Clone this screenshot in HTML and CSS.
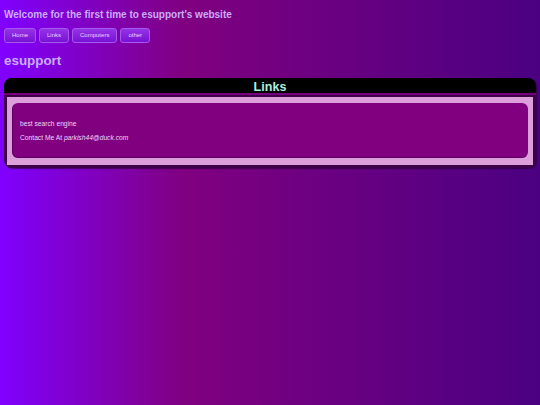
FILE: index.html
```html
<!DOCTYPE html>
<html>
<head>
<meta charset="utf-8">
<link rel="stylesheet" href="styles.css">
</head>
<body>
<h2 class="welcome">Welcome for the first time to esupport's website</h2>
<nav class="nav">
  <a class="btn" href="#">Home</a>
  <a class="btn" href="#">Links</a>
  <a class="btn" href="#">Computers</a>
  <a class="btn" href="#">other</a>
</nav>
<h1 class="site">esupport</h1>
<section class="panel">
  <h3 class="panel-head">Links</h3>
  <div class="panel-body">
    <div class="card">
      <p class="line">best search engine</p>
      <p class="line">Contact Me At <em>parkish44@duck.com</em></p>
    </div>
  </div>
</section>
</body>
</html>
```
FILE: styles.css
```css
html, body {
  margin: 0;
  height: 100%;
}
body {
  padding: 0 4px;
  box-sizing: border-box;
  font-family: "Liberation Sans", Arial, sans-serif;
  background: linear-gradient(to right, #8000ff 0%, #800080 34%, #4b0082 100%);
  color: #e6ccff;
}
.welcome {
  margin: 0;
  padding-top: 9px;
  font-size: 10px;
  line-height: 12px;
  font-weight: bold;
  color: #c9aefc;
}
.nav {
  display: flex;
  gap: 3px;
  margin-top: 7px;
}
.btn {
  display: block;
  height: 15px;
  box-sizing: border-box;
  padding: 0 7px;
  line-height: 13px;
  font-size: 6px;
  color: #e8d4ff;
  text-decoration: none;
  border: 1px solid #a458ee;
  border-radius: 3px;
  background: linear-gradient(to bottom, #9632e6, #7812d4);
}
.site {
  margin: 10px 0 0;
  font-size: 13.4px;
  line-height: 16px;
  font-weight: bold;
  color: #c9aefc;
}
.panel {
  margin-top: 9px;
  background: #3e0046;
  border-radius: 8px;
  padding: 0 3px 3px;
  box-shadow: 1px 1px 1px rgba(30, 0, 40, 0.6);
}
.panel-head {
  margin: 0 -3px;
  height: 15px;
  line-height: 18px;
  background: #000;
  border-radius: 8px 8px 0 0;
  border-bottom: 2px solid #76007a;
  text-align: center;
  font-size: 12.6px;
  font-weight: bold;
  color: #aaeedd;
}
.panel-body {
  margin-top: 2px;
  background: #dc9fdc;
  padding: 6px 5px 7px;
}
.card {
  background: #800080;
  border-radius: 6px;
  padding: 17px 8px 16px;
  box-shadow: inset 1px -1px 0 rgba(60, 0, 60, 0.5);
}
.line {
  margin: 0;
  font-size: 6.7px;
  line-height: 8px;
  color: #ecd8ff;
}
.line + .line {
  margin-top: 6px;
}
```
